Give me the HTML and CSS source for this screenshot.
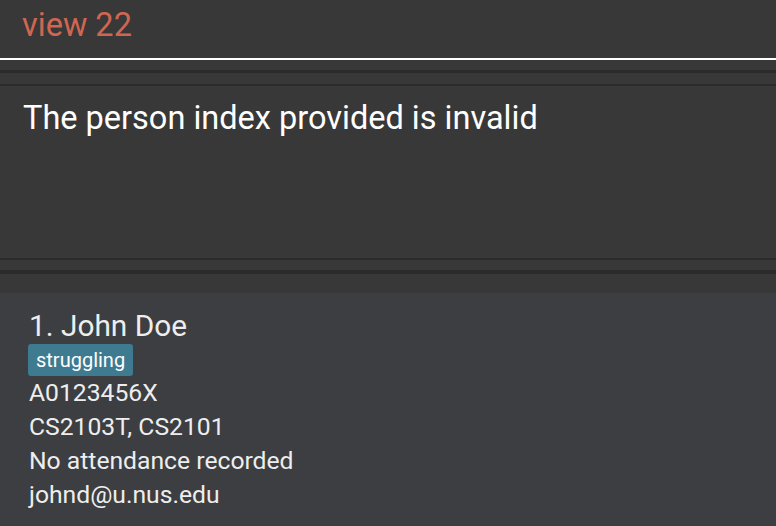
FILE: index.html
```html
<!DOCTYPE html>
<html>
<head>
<meta charset="utf-8">
<link rel="stylesheet" href="styles.css">
</head>
<body>
<div class="cmd">view 22</div>
<div class="result-pane">
  <div class="result-frame">
    <div class="result">The person index provided is invalid</div>
  </div>
</div>
<div class="list-pane">
  <div class="card">
    <div class="name">1. John Doe</div>
    <div class="tags"><span class="tag">struggling</span></div>
    <div class="line">A0123456X</div>
    <div class="line">CS2103T, CS2101</div>
    <div class="line">No attendance recorded</div>
    <div class="line">johnd@u.nus.edu</div>
  </div>
</div>
</body>
</html>
```
FILE: styles.css
```css
html, body {
  margin: 0;
  padding: 0;
  background: #383838;
  font-family: "Roboto", "Noto Sans", sans-serif;
  overflow: hidden;
}
body {
  height: 526px;
  display: flex;
  flex-direction: column;
}
.cmd {
  box-sizing: border-box;
  flex: none;
  height: 60px;
  border-bottom: 2px solid #ffffff;
  padding-left: 22px;
  color: #d06651;
  font-size: 32.5px;
  line-height: 50px;
}
.result-pane {
  flex: none;
  padding-top: 10px;
  padding-bottom: 10px;
}
.result-frame {
  border-top: 3px solid #2b2b2b;
  padding-top: 11px;
}
.result {
  border-top: 2px solid #2b2b2b;
  border-bottom: 2px solid #2b2b2b;
  height: 159px;
  padding: 13px 23px 0;
  color: #ffffff;
  font-size: 32.5px;
  line-height: 38px;
}
.list-pane {
  flex: 1;
  min-height: 0;
  border-top: 4px solid #2b2b2b;
  padding-top: 19px;
  display: flex;
  flex-direction: column;
}
.card {
  flex: 1;
  background: #3c3e41;
  padding: 15px 29px 0;
  color: #eeeeee;
}
.name {
  font-size: 29.8px;
  line-height: 36px;
}
.tags {
  display: flex;
  margin-left: -1px;
}
.tag {
  background: #3e7b91;
  color: #ffffff;
  font-size: 20px;
  line-height: 30px;
  padding: 1px 8px;
  border-radius: 3px;
}
.line {
  font-size: 24.7px;
  line-height: 34px;
}
```
